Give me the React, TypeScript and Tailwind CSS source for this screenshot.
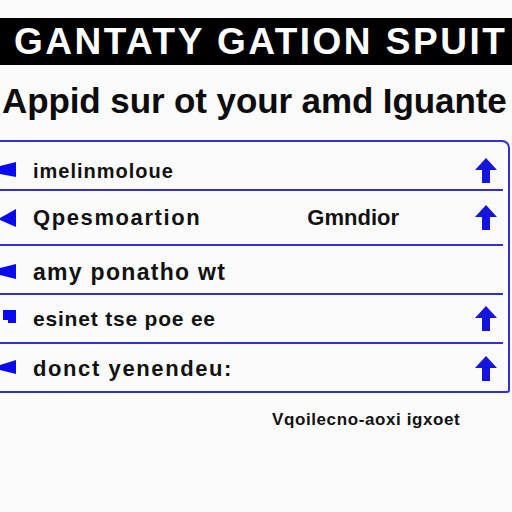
import React from "react";

const Arrow = () => (
  <svg width="22" height="25" viewBox="0 0 22 25" className="shrink-0">
    <polygon points="11,0 22,12 15,12 15,25 7,25 7,12 0,12" fill="#1414dc" />
  </svg>
);

const Flag = ({ kind }: { kind: number }) => {
  const pts =
    kind === 0
      ? "0,4 16,0 16,15 0,12"
      : kind === 1
      ? "0,9 16,0 16,18 0,11"
      : kind === 2
      ? "0,4 16,0 16,15 0,11"
      : kind === 3
      ? "3,0 16,0 16,13 8,13 8,10 3,10"
      : "0,5 16,0 16,14 0,10";
  return (
    <svg width="16" height="18" viewBox="0 0 16 18" className="shrink-0">
      <polygon points={pts} fill="#0a0af0" />
    </svg>
  );
};

type Row = {
  text: string;
  size: string;
  mid?: string;
  arrow: boolean;
  h: string;
  flag: number;
  pad: string;
};

const rows: Row[] = [
  { text: "imelinmoloue", size: "text-[20px] tracking-[1px]", arrow: true, h: "h-[47px]", flag: 0, pad: "pt-[10px]" },
  { text: "Qpesmoartion", size: "text-[22px] tracking-[1.6px]", mid: "Gmndior", arrow: true, h: "h-[53px]", flag: 1, pad: "pt-0" },
  { text: "amy ponatho wt", size: "text-[23px] tracking-[1.3px]", arrow: false, h: "h-[47px]", flag: 2, pad: "pt-[6px]" },
  { text: "esinet tse poe ee", size: "text-[21px] tracking-[0.8px]", arrow: true, h: "h-[47px]", flag: 3, pad: "pt-0" },
  { text: "donct yenendeu:", size: "text-[22px] tracking-[1.6px]", arrow: true, h: "h-[47px]", flag: 4, pad: "pt-[2px]" },
];

export default function App() {
  return (
    <div
      className="w-[512px] h-[512px] bg-[#fbfbfb] overflow-hidden flex flex-col pt-[18px]"
      style={{ fontFamily: '"Liberation Sans", Arial, sans-serif' }}
    >
      <div className="h-[47px] bg-black flex items-center pl-[14px] shrink-0">
        <span className="text-white font-bold text-[37px] leading-none tracking-[2.5px] whitespace-nowrap">
          GANTATY GATION SPUIT
        </span>
      </div>
      <div className="mt-[18px] pl-[2px] text-[35px] leading-none font-bold text-[#0c0c0c] whitespace-nowrap tracking-[-0.1px]">
        Appid sur ot your amd Iguante
      </div>
      <div className="mt-[22px] w-[510px] border-t-2 border-r-2 border-b-2 border-[#3030d6] rounded-tr-[8px] rounded-br-[3px] flex flex-col">
        {rows.map((r, i) => (
          <React.Fragment key={i}>
            <div className={`${r.h} flex items-center pr-[11px] ${r.pad}`}>
              <Flag kind={r.flag} />
              <span className={`ml-[17px] font-bold text-[#111] whitespace-nowrap ${r.size}`}>{r.text}</span>
              {r.mid ? (
                <span className="ml-[106px] font-bold text-[22px] text-[#111] whitespace-nowrap">{r.mid}</span>
              ) : null}
              <div className="flex-1" />
              {r.arrow ? <Arrow /> : null}
            </div>
            {i < rows.length - 1 ? <div className="h-[2px] w-[503px] bg-[#3030d6]" /> : null}
          </React.Fragment>
        ))}
      </div>
      <div className="mt-[18px] ml-[272px] text-[17px] font-bold text-[#111] tracking-[0.6px] whitespace-nowrap leading-none">
        Vqoilecno-aoxi igxoet
      </div>
    </div>
  );
}
